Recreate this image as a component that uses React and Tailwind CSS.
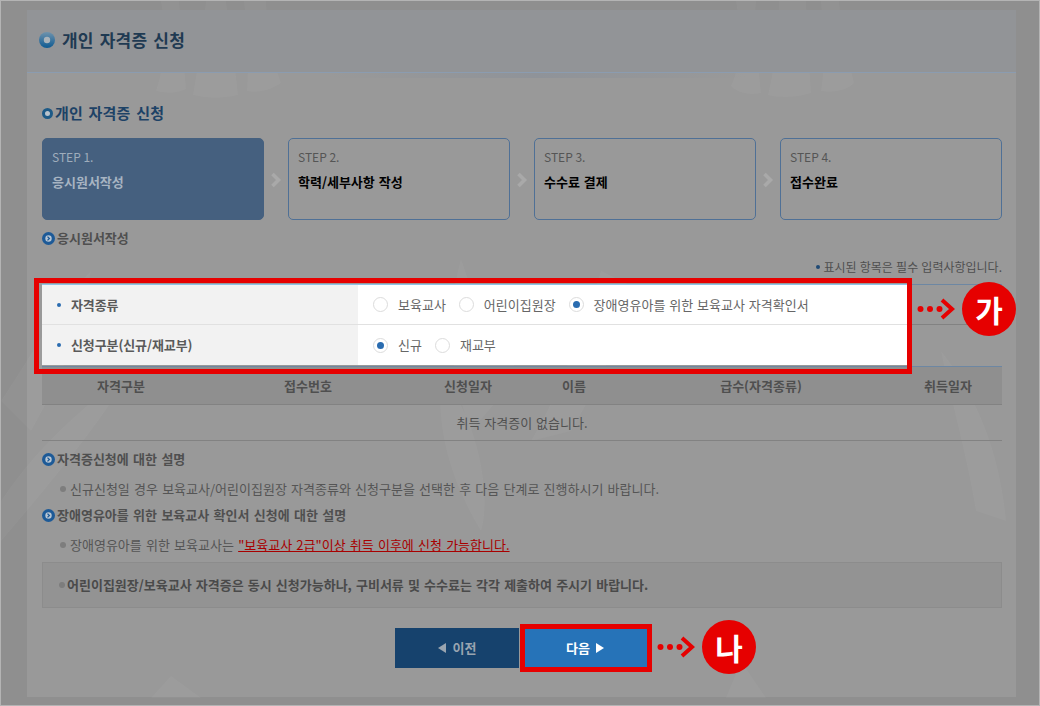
import React from 'react';

const FONT = "font-['Noto_Sans_CJK_KR','Noto_Sans',sans-serif]";

const steps = [
  { no: 'STEP 1.', name: '응시원서작성', active: true },
  { no: 'STEP 2.', name: '학력/세부사항 작성' },
  { no: 'STEP 3.', name: '수수료 결제' },
  { no: 'STEP 4.', name: '접수완료' },
];

const columns = ['자격구분', '접수번호', '신청일자', '이름', '급수(자격종류)', '취득일자'];

const BlueBullet = () => (
  <svg width="13" height="13" viewBox="0 0 13 13" className="shrink-0">
    <circle cx="6.5" cy="6.5" r="6.5" fill="#1d5a97" />
    <circle cx="6.5" cy="6.5" r="3.2" fill="#b9c6d3" />
    <path d="M5.5 4.6 L7.4 6.5 L5.5 8.4" fill="none" stroke="#1d5a97" strokeWidth="1.3" />
  </svg>
);

const GrayDot = () => <span className="w-[6px] h-[6px] rounded-full bg-[#7d7d7d] shrink-0" />;

const Heading = ({ children, className }) => (
  <div className={`flex items-center gap-[2px] text-[13px] leading-[18px] font-bold text-[#4f4f4f] [word-spacing:1.4px] ${className}`}>
    <BlueBullet />
    <span>{children}</span>
  </div>
);

const Radio = ({ label, checked, className }) => (
  <label className={`flex items-center gap-[10px] ${className}`}>
    <span className="w-[15px] h-[15px] rounded-full border border-[#dcdcdc] bg-white flex items-center justify-center">
      {checked && <span className="w-[7px] h-[7px] rounded-full bg-[#2a6cb0]" />}
    </span>
    <span>{label}</span>
  </label>
);

const Row = ({ label, children, last }) => (
  <div className={`flex ${last ? 'h-[41px] pb-[1px]' : 'h-[40px]'}`}>
    <div className={`w-[316px] flex items-center bg-[#f2f2f2] pl-[15px] gap-[10px] font-bold text-[#5a5a5a] text-[13px] tracking-[-0.1px] ${last ? '' : 'border-b border-[#e1e1e1]'}`}>
      <span className="w-[4px] h-[4px] rounded-full bg-[#2a6cb0]" />
      <span>{label}</span>
    </div>
    <div className={`w-[549px] flex items-center bg-white pl-[15px] text-[13px] text-[#666666] [word-spacing:1px] ${last ? '' : 'border-b border-[#e1e1e1]'}`}>
      {children}
    </div>
    <div className={`flex-1 ${last ? '' : 'border-b border-[#828282]'}`} />
  </div>
);

const Dots = () => (
  <svg width="38" height="24" viewBox="0 0 38 24" className="shrink-0">
    <circle cx="3.5" cy="12" r="3" fill="#e60000" />
    <circle cx="13" cy="12" r="3" fill="#e60000" />
    <circle cx="22.5" cy="12" r="3" fill="#e60000" />
    <path d="M25 3 L35 12 L25 21" fill="none" stroke="#e60000" strokeWidth="4" />
  </svg>
);

const Badge = ({ children }) => (
  <span className="w-[54px] h-[54px] rounded-full bg-[#e60000] text-white font-bold text-[30px] flex items-center justify-center">
    {children}
  </span>
);

export default function App() {
  return (
    <div className={`${FONT} relative w-[1040px] h-[706px] overflow-hidden bg-[#8f8f8f] border border-[#b4b4b4] pl-[26px] pt-[9px]`}>
      <div className="relative w-[989px] h-[687px] bg-[#999999]">
        {/* faint background artwork */}
        <svg className="absolute left-[-26px] top-[-9px]" width="1040" height="706" viewBox="0 0 1040 706">
          <g fill="#ffffff" fillOpacity="0.035">
            <path d="M160 0 L178 0 L185 88 C175 93 165 92 155 90 C165 60 165 30 160 0Z" />
            <path d="M205 0 L225 0 C228 30 234 60 237 94 C220 98 205 97 192 94 C198 60 202 30 205 0Z" />
            <path d="M243 0 L265 0 C266 30 272 60 280 82 C268 90 256 92 246 90 C248 60 246 30 243 0Z" />
            <path d="M735 0 L755 0 C752 30 757 60 760 92 C745 95 735 90 730 85 C742 60 740 30 735 0Z" />
            <path d="M778 0 L805 0 C806 30 808 60 810 92 C790 98 775 96 767 94 C775 60 778 30 778 0Z" />
            <path d="M820 0 L838 0 C840 30 848 60 853 82 C845 90 832 92 820 90 C825 60 822 30 820 0Z" />
            <path d="M0 400 C40 340 60 300 90 270 C80 320 70 360 30 430 Z" />
            <path d="M0 500 C40 440 90 400 130 370 C100 420 60 470 0 540 Z" />
            <path d="M460 258 C475 300 480 330 520 372 L470 430 C455 390 440 330 460 258Z" />
            <path d="M440 375 C480 420 490 500 480 530 C450 480 435 430 440 375Z" />
            <path d="M600 270 C580 330 560 390 530 440 L570 430 C600 380 620 330 640 290Z" />
            <path d="M940 350 C980 400 1000 460 1005 520 L975 510 C965 450 950 400 940 350Z" />
            <path d="M170 675 L200 697 L150 697Z" />
            <path d="M740 660 L765 697 L725 697Z" />
          </g>
        </svg>

        <div className="relative">
          {/* page title */}
          <div className="h-[63px] border-b border-[#8b9cb0] bg-[#929497] flex items-center pl-[12px] gap-[7px] pb-[3px]">
            <svg width="16" height="16" viewBox="0 0 16 16" className="shrink-0">
              <defs>
                <linearGradient id="donut" x1="0" y1="0" x2="0" y2="1">
                  <stop offset="0" stopColor="#6f93ad" />
                  <stop offset="1" stopColor="#0e5a92" />
                </linearGradient>
              </defs>
              <circle cx="8" cy="8" r="8" fill="url(#donut)" />
              <circle cx="8" cy="8" r="3.2" fill="#aab3ba" />
            </svg>
            <h1 className="text-[17px] font-bold tracking-[0.2px] [word-spacing:2px] text-[#1f3a52]">개인 자격증 신청</h1>
          </div>
          <div className="absolute left-[300px] top-[63px] w-[420px] h-[5px] bg-gradient-to-r from-transparent via-[#8f9399] to-transparent" />

          <div className="pl-[15px] w-[975px]">
            <div className="flex items-center gap-[2px] mt-[30px] h-[20px] text-[15px] font-bold tracking-[0.2px] [word-spacing:2px] text-[#1d4266]">
              <span className="w-[11px] h-[11px] rounded-full border-[3px] border-[#1d5a87] bg-[#b9c3cc]" />
              <h2>개인 자격증 신청</h2>
            </div>

            {/* steps */}
            <div className="flex justify-between mt-[15px]">
              {steps.map((step, idx) => (
                <React.Fragment key={step.no}>
                  {idx > 0 && (
                    <svg width="24" height="82" viewBox="0 0 24 82" className="shrink-0">
                      <path d="M8.5 36 L14.5 42 L8.5 48" fill="none" stroke="#a9a9a9" strokeWidth="3.6" />
                    </svg>
                  )}
                  <div className={`w-[222px] h-[82px] rounded-[5px] border pl-[9px] pt-[10px] ${step.active ? 'bg-[#45607f] border-[#45607f]' : 'border-[#4f7096]'}`}>
                    <div className={`text-[12px] leading-[16px] ${step.active ? 'text-[#9fadbc]' : 'text-[#555555]'}`}>{step.no}</div>
                    <div className={`mt-[9px] text-[13px] leading-[16px] font-bold [word-spacing:1px] ${step.active ? 'text-[#a7b4c2]' : 'text-black'}`}>{step.name}</div>
                  </div>
                </React.Fragment>
              ))}
            </div>

            <Heading className="mt-[9px]">응시원서작성</Heading>

            <div className="mt-[12px] flex items-center justify-end gap-[3px] text-[12px] leading-[16px] [word-spacing:0.5px] text-[#4f4f4f]">
              <span className="w-[4px] h-[4px] rounded-full bg-[#1f4a75]" />
              표시된 항목은 필수 입력사항입니다.
            </div>

            {/* form table */}
            <div className="mt-[9px] flex h-[1px]">
              <div className="w-[865px] bg-[#8fc1e8]" />
              <div className="flex-1 bg-[#6d87a3]" />
            </div>
            <Row label="자격종류">
              <Radio label="보육교사" />
              <Radio label="어린이집원장" className="ml-[13px]" />
              <Radio label="장애영유아를 위한 보육교사 자격확인서" checked className="ml-[13px]" />
            </Row>
            <Row label="신청구분(신규/재교부)" last>
              <Radio label="신규" checked />
              <Radio label="재교부" className="ml-[13px]" />
            </Row>

            {/* issued table */}
            <div className="border-t border-[#6d87a3]">
              <div className="grid grid-cols-[158px_216px_104px_108px_266px_108px] h-[38px] items-center text-center bg-[#8f8f8f] border-b border-[#828282] text-[13px] font-bold text-[#4f4f4f]">
                {columns.map((col) => (
                  <div key={col}>{col}</div>
                ))}
              </div>
              <div className="h-[36px] flex items-center justify-center border-b border-[#828282] text-[13px] [word-spacing:1px] text-[#505050]">
                취득 자격증이 없습니다.
              </div>
            </div>

            <Heading className="mt-[9px]">자격증신청에 대한 설명</Heading>
            <div className="mt-[12px] pl-[18px] flex items-center gap-[4px] text-[13px] leading-[18px] [word-spacing:1.3px] text-[#555555]">
              <GrayDot />
              신규신청일 경우 보육교사/어린이집원장 자격종류와 신청구분을 선택한 후 다음 단계로 진행하시기 바랍니다.
            </div>
            <Heading className="mt-[8px]">장애영유아를 위한 보육교사 확인서 신청에 대한 설명</Heading>
            <div className="mt-[12px] pl-[18px] flex items-center gap-[4px] text-[13px] leading-[18px] [word-spacing:1.3px] text-[#555555]">
              <GrayDot />
              <span>
                장애영유아를 위한 보육교사는{' '}
                <span className="underline text-[#a80000]">"보육교사 2급"이상 취득 이후에 신청 가능합니다.</span>
              </span>
            </div>

            <div className="mt-[8px] h-[46px] border border-[#8c8c8c] bg-[#939393] pl-[16px] flex items-center gap-[2px] text-[13px] font-bold [word-spacing:1.2px] text-[#4a4a4a]">
              <GrayDot />
              어린이집원장/보육교사 자격증은 동시 신청가능하나, 구비서류 및 수수료는 각각 제출하여 주시기 바랍니다.
            </div>

            {/* buttons */}
            <div className="relative mt-[20px] ml-[353px] flex gap-[6px]">
              <button className="w-[124px] h-[40px] bg-[#16426d] flex items-center justify-center gap-[7px] text-[13px] font-bold text-[#9aa5b0]">
                <span className="w-0 h-0 border-y-[5px] border-y-transparent border-r-[8px] border-r-[#9aa5b0]" />
                이전
              </button>
              <div className="relative">
                <button className="w-[122px] h-[40px] bg-[#2673b8] flex items-center justify-center gap-[6px] pr-[2px] text-[13px] font-bold text-white">
                  다음
                  <span className="w-0 h-0 border-y-[5px] border-y-transparent border-l-[8px] border-l-white" />
                </button>
                <div className="absolute left-[-5px] top-[-4px] w-[132px] h-[48px] border-[5px] border-[#e60000]" />
                <div className="absolute left-[132px] top-[-8px] flex items-center gap-[7px]">
                  <Dots />
                  <Badge>나</Badge>
                </div>
              </div>
            </div>
          </div>
        </div>

        {/* red annotation over the form */}
        <div className="absolute left-[7px] top-[268px] w-[878px] h-[96px] border-[5px] border-[#e60000]" />
        <div className="absolute left-[890px] top-[272px] flex items-center gap-[7px]">
          <Dots />
          <Badge>가</Badge>
        </div>
      </div>
    </div>
  );
}
